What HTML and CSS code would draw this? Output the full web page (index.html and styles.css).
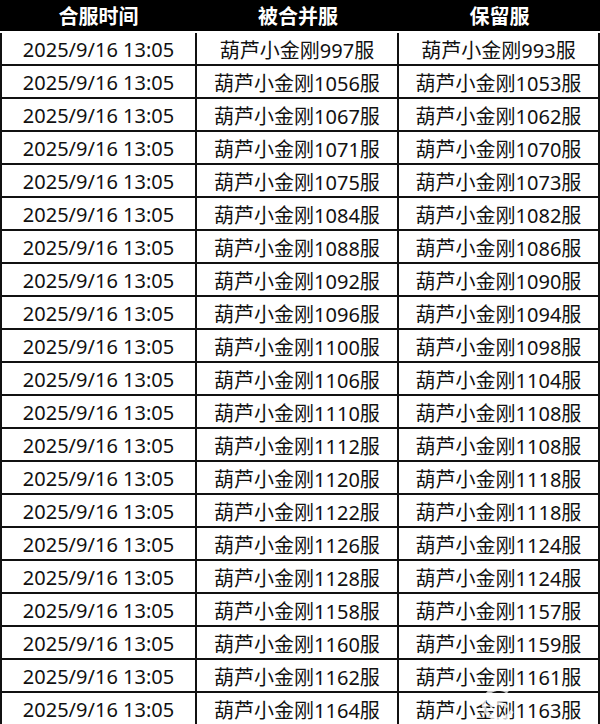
FILE: index.html
```html
<!DOCTYPE html>
<html lang="zh-CN">
<head>
<meta charset="utf-8">
<link rel="stylesheet" href="styles.css">
</head>
<body>
<div class="sheet">
  <div class="grid">
    <div class="cell head">合服时间</div><div class="cell head">被合并服</div><div class="cell head">保留服</div>
    <div class="cell">2025/9/16 13:05</div><div class="cell">葫芦小金刚997服</div><div class="cell">葫芦小金刚993服</div>
    <div class="cell">2025/9/16 13:05</div><div class="cell">葫芦小金刚1056服</div><div class="cell">葫芦小金刚1053服</div>
    <div class="cell">2025/9/16 13:05</div><div class="cell">葫芦小金刚1067服</div><div class="cell">葫芦小金刚1062服</div>
    <div class="cell">2025/9/16 13:05</div><div class="cell">葫芦小金刚1071服</div><div class="cell">葫芦小金刚1070服</div>
    <div class="cell">2025/9/16 13:05</div><div class="cell">葫芦小金刚1075服</div><div class="cell">葫芦小金刚1073服</div>
    <div class="cell">2025/9/16 13:05</div><div class="cell">葫芦小金刚1084服</div><div class="cell">葫芦小金刚1082服</div>
    <div class="cell">2025/9/16 13:05</div><div class="cell">葫芦小金刚1088服</div><div class="cell">葫芦小金刚1086服</div>
    <div class="cell">2025/9/16 13:05</div><div class="cell">葫芦小金刚1092服</div><div class="cell">葫芦小金刚1090服</div>
    <div class="cell">2025/9/16 13:05</div><div class="cell">葫芦小金刚1096服</div><div class="cell">葫芦小金刚1094服</div>
    <div class="cell">2025/9/16 13:05</div><div class="cell">葫芦小金刚1100服</div><div class="cell">葫芦小金刚1098服</div>
    <div class="cell">2025/9/16 13:05</div><div class="cell">葫芦小金刚1106服</div><div class="cell">葫芦小金刚1104服</div>
    <div class="cell">2025/9/16 13:05</div><div class="cell">葫芦小金刚1110服</div><div class="cell">葫芦小金刚1108服</div>
    <div class="cell">2025/9/16 13:05</div><div class="cell">葫芦小金刚1112服</div><div class="cell">葫芦小金刚1108服</div>
    <div class="cell">2025/9/16 13:05</div><div class="cell">葫芦小金刚1120服</div><div class="cell">葫芦小金刚1118服</div>
    <div class="cell">2025/9/16 13:05</div><div class="cell">葫芦小金刚1122服</div><div class="cell">葫芦小金刚1118服</div>
    <div class="cell">2025/9/16 13:05</div><div class="cell">葫芦小金刚1126服</div><div class="cell">葫芦小金刚1124服</div>
    <div class="cell">2025/9/16 13:05</div><div class="cell">葫芦小金刚1128服</div><div class="cell">葫芦小金刚1124服</div>
    <div class="cell">2025/9/16 13:05</div><div class="cell">葫芦小金刚1158服</div><div class="cell">葫芦小金刚1157服</div>
    <div class="cell">2025/9/16 13:05</div><div class="cell">葫芦小金刚1160服</div><div class="cell">葫芦小金刚1159服</div>
    <div class="cell">2025/9/16 13:05</div><div class="cell">葫芦小金刚1162服</div><div class="cell">葫芦小金刚1161服</div>
    <div class="cell">2025/9/16 13:05</div><div class="cell">葫芦小金刚1164服</div><div class="cell">葫芦小金刚1163服</div>
  </div>
  <svg class="watermark" width="44" height="40" viewBox="0 0 44 40"><path d="M32 8 A15 15 0 1 0 36 27" fill="none" stroke="#fff" stroke-width="4"/><path d="M14 23 Q23 16 32 23" fill="none" stroke="#fff" stroke-width="3"/></svg>
</div>
</body>
</html>
```
FILE: styles.css
```css
html, body {
  margin: 0;
  padding: 0;
  background: #fff;
}
.sheet {
  position: relative;
  width: 600px;
  height: 724px;
  overflow: hidden;
}
.grid {
  display: grid;
  grid-template-columns: 197px 202px 201px;
  grid-auto-rows: 33px;
  font-family: "Noto Sans", "Noto Sans CJK SC", sans-serif;
  font-size: 20px;
  color: #111;
}
.cell {
  box-sizing: border-box;
  display: flex;
  align-items: center;
  justify-content: center;
  border-right: 2px solid #111;
  border-bottom: 2px solid #111;
  white-space: nowrap;
  padding-top: 1px;
}
.cell:nth-child(3n+1) {
  border-left: 2px solid #111;
}
.head {
  height: 31px;
  background: #000;
  color: #fff;
  font-weight: bold;
  padding-top: 0;
}
.grid .head {
  border: none;
}
.watermark {
  position: absolute;
  left: 476px;
  top: 684px;
  opacity: 0.75;
}
```
